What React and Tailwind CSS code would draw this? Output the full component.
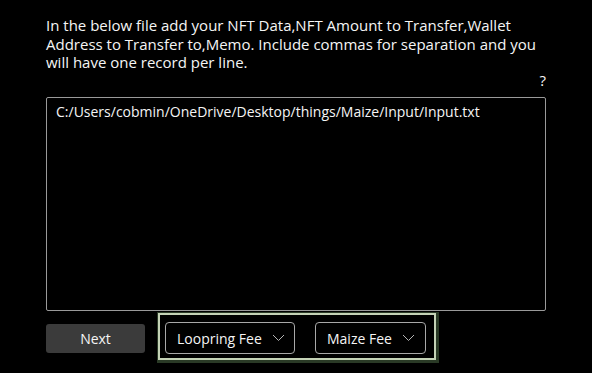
import React from "react";

function Chevron() {
  return (
    <svg width="13" height="8" viewBox="0 0 13 8" fill="none" className="ml-[10px]">
      <path d="M1 1 L6.5 6.5 L12 1" stroke="#b5b5b5" strokeWidth="1" />
    </svg>
  );
}

export default function App() {
  return (
    <div
      className="w-[592px] h-[373px] bg-black text-[#f5f5f5] overflow-hidden flex flex-col"
      style={{ fontFamily: "'Open Sans', 'Liberation Sans', sans-serif" }}
    >
      <p className="pl-[46px] pt-[16px] text-[15px] leading-[18.5px] whitespace-nowrap">
        In the below file add your NFT Data,NFT Amount to Transfer,Wallet
        <br />
        Address to Transfer to,Memo. Include commas for separation and you
        <br />
        will have one record per line.
      </p>
      <div className="flex justify-end pr-[46px] h-[27px] items-start text-[15px] leading-[20px] mt-[-1.5px]">
        ?
      </div>
      <div className="ml-[46px] w-[500px] h-[214px] border border-[#9a9a9a] rounded-[2px] pl-[9px] pt-[3px] text-[14px] leading-[22px]">
        C:/Users/cobmin/OneDrive/Desktop/things/Maize/Input/Input.txt
      </div>
      <div className="flex items-start ml-[46px] mt-[2px]">
        <button className="mt-[11px] w-[99px] h-[29px] bg-[#3b3b3b] rounded-[3px] text-[14px] text-[#f5f5f5]">
          Next
        </button>
        <div className="ml-[13px] w-[278px] h-[47px] border-2 border-[#c4d2b6] shadow-[1px_1px_0_2px_#2a3a26] flex items-center pl-[5px] pt-[3px] gap-[20px]">
          <div className="w-[130px] h-[32px] border border-[#a8a8a8] rounded-[4px] flex items-center pl-[11px] text-[14px]">
            Loopring Fee
            <Chevron />
          </div>
          <div className="w-[111px] h-[32px] border border-[#a8a8a8] rounded-[4px] flex items-center pl-[11px] text-[14px]">
            Maize Fee
            <Chevron />
          </div>
        </div>
      </div>
    </div>
  );
}
